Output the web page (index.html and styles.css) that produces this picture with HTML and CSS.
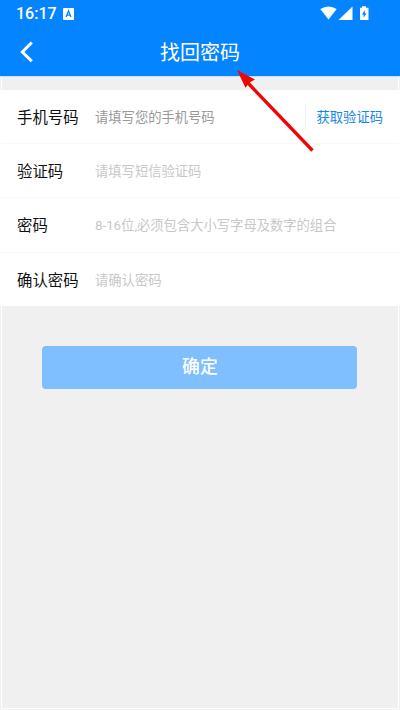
FILE: index.html
```html
<!DOCTYPE html>
<html lang="zh-CN">
<head>
<meta charset="utf-8">
<title>找回密码</title>
<link rel="stylesheet" href="styles.css">
</head>
<body>
<div class="screen">
  <header class="header">
    <div class="status">
      <span class="time">16:17</span>
      <svg class="keyboard" width="11" height="12" viewBox="0 0 11 12"><rect width="11" height="12" rx="1" fill="#fff"/><path d="M3 9 5.5 3 8 9M4 7.2H7" fill="none" stroke="#0584ff" stroke-width="1.3"/></svg>
      <svg class="signals" width="50" height="16" viewBox="0 0 50 16" fill="#fff"><path d="M1.3 4Q9.5-1 17.7 4L9.5 14.5Z"/><path d="M19.5 15 33.5 1.5V15Z"/><path d="M41 2.7H43V1.3H47V2.7H49.5V15H41Z"/><path d="M45.7 5 43 9.6H44.6V12.8L47.6 8.2H45.7Z" fill="#0584ff"/></svg>
    </div>
    <div class="titlebar">
      <svg class="back" width="14" height="22" viewBox="0 0 14 22"><path d="M11.8 1.5 2.3 11 11.8 20.3" fill="none" stroke="#fff" stroke-width="3"/></svg>
      <h1>找回密码</h1>
    </div>
  </header>
  <main class="form">
    <div class="row"><span class="label">手机号码</span><span class="hint active">请填写您的手机号码</span><span class="code">获取验证码</span></div>
    <div class="row"><span class="label">验证码</span><span class="hint">请填写短信验证码</span></div>
    <div class="row"><span class="label">密码</span><span class="hint">8-16位,必须包含大小写字母及数字的组合</span></div>
    <div class="row"><span class="label">确认密码</span><span class="hint">请确认密码</span></div>
  </main>
  <button class="submit">确定</button>
  <svg class="arrow" width="80" height="86" viewBox="0 0 80 86"><path d="M11 13 75.5 80.5" stroke="#f00505" stroke-width="3.3"/><path d="M0 0 18 9.5 12.5 12.5 8.5 17.8Z" fill="#f00505"/></svg>
</div>
</body>
</html>
```
FILE: styles.css
```css
* { box-sizing: border-box; }
body { margin: 0; font-family: Roboto, "Noto Sans CJK SC", sans-serif; }
.screen {
  position: relative;
  height: 710px;
  overflow: hidden;
  background: #f0f0f0;
}
.screen::after {
  content: "";
  position: absolute;
  inset: 77px 1px 1px;
  border: solid #fff;
  border-width: 0 1px 1px;
}
.header { height: 77px; background: #0584ff; border-bottom: 1px solid #c5e1fc; }
.status {
  display: flex;
  align-items: center;
  height: 27px;
  padding: 0 31px 0 16px;
}
.time { width: 47px; font: 500 16px/27px Roboto, sans-serif; color: #fff; }
.signals { margin-left: auto; margin-top: -1px; }
.titlebar {
  display: grid;
  grid-template-columns: 20px 1fr 20px;
  align-items: center;
  height: 49px;
  padding: 0 20px;
}
h1 { margin: 0; padding-top: 4px; font-size: 20px; line-height: 45px; font-weight: 400; color: #fff; text-align: center; }
.form { margin-top: 13px; background: #fff; }
.row {
  display: flex;
  align-items: center;
  height: 54px;
  padding: 0 16px 0 17px;
  border-bottom: 1px solid #f8f8f8;
}
.row:nth-child(3) { height: 55px; }
.row:last-child { height: 53px; border: 0; }
.label { width: 78px; padding-top: 2px; font-size: 15.4px; line-height: 22px; color: #111; }
.hint { flex: 1; padding-top: 2px; font-size: 13.3px; line-height: 22px; color: #c8c8c8; white-space: nowrap; }
.hint.active { color: #999; }
.code {
  padding: 2px 0 0 11px;
  margin-right: 1px;
  border-left: 1px solid #eee;
  font-size: 13.3px;
  line-height: 24px;
  color: #1687e8;
}
.submit {
  display: block;
  width: 315px;
  height: 43px;
  margin: 40px 0 0 42.4px;
  padding: 0 0 4px;
  border: 0;
  border-radius: 4px;
  background: #7fbfff;
  color: #fff;
  font: 500 17.8px/39px "Noto Sans CJK SC", sans-serif;
}
.arrow { position: absolute; left: 236.5px; top: 69.5px; z-index: 1; }
```
